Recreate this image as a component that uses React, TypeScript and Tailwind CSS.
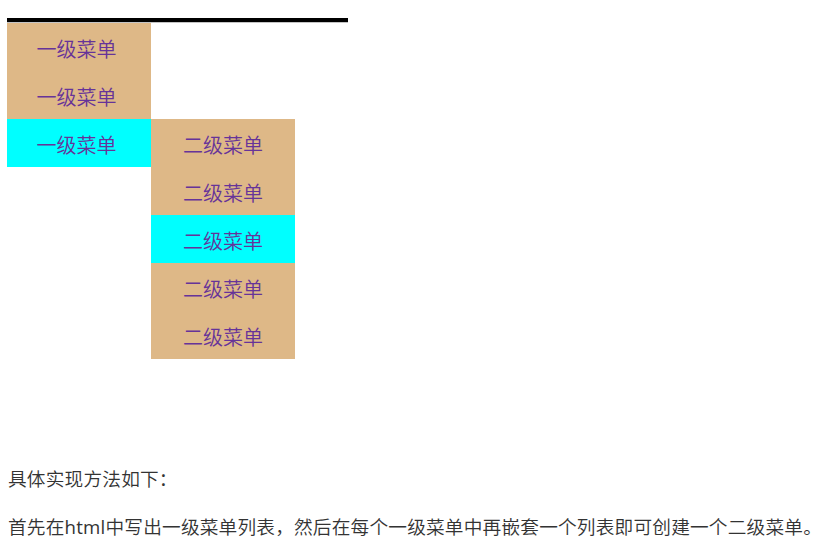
const font = { fontFamily: '"Microsoft YaHei", "Noto Sans CJK SC", "Noto Sans", sans-serif' };

const level1 = ['一级菜单', '一级菜单', '一级菜单'];
const level2 = ['二级菜单', '二级菜单', '二级菜单', '二级菜单', '二级菜单'];

export default function App() {
  return (
    <div className="bg-white w-[821px] h-[555px] overflow-hidden pt-[18px] pl-[7px]" style={font}>
      {/* nav bar */}
      <div className="w-[341px] border-t-4 border-black border-b border-b-[#c4c4c4]" />

      <div className="flex items-start">
        <ul className="w-[144px]">
          {level1.map((t, i) => (
            <li
              key={i}
              className={`h-12 pt-[4px] leading-[44px] text-center text-[20px] font-[350] text-[#663399] pr-[5px] ${
                i === 2 ? 'bg-[#00ffff]' : 'bg-[#deb887]'
              }`}
            >
              {t}
            </li>
          ))}
        </ul>
        <ul className="w-[144px] mt-[96px]">
          {level2.map((t, i) => (
            <li
              key={i}
              className={`h-12 pt-[4px] leading-[44px] text-center text-[20px] font-[350] text-[#663399] ${
                i === 2 ? 'bg-[#00ffff]' : 'bg-[#deb887]'
              }`}
            >
              {t}
            </li>
          ))}
        </ul>
      </div>

      <div className="mt-[105px] pl-px text-[18.67px] leading-[28px] font-[350] tracking-[0.2px] text-[#333333]">
        <p>具体实现方法如下：</p>
        <p className="mt-[20px] whitespace-nowrap">
          首先在<span className="font-normal" style={{ fontFamily: '"Open Sans", sans-serif' }}>html</span>中写出一级菜单列表，然后在每个一级菜单中再嵌套一个列表即可创建一个二级菜单。
        </p>
      </div>
    </div>
  );
}
